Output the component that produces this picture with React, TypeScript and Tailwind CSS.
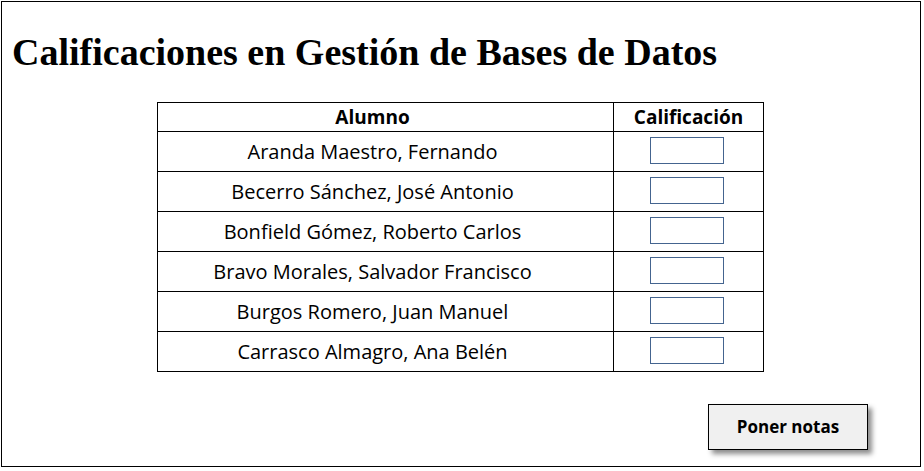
import * as React from 'react'

const alumnos = [
  'Aranda Maestro, Fernando',
  'Becerro Sánchez, José Antonio',
  'Bonfield Gómez, Roberto Carlos',
  'Bravo Morales, Salvador Francisco',
  'Burgos Romero, Juan Manuel',
  'Carrasco Almagro, Ana Belén',
]

const sans = { fontFamily: '"Open Sans", "Noto Sans", sans-serif' }

export default function App() {
  const [notas, setNotas] = React.useState<string[]>(alumnos.map(() => ''))

  return (
    <div className="bg-white w-[924px] h-[471px] pt-px pl-px">
      <div className="w-[920px] h-[466px] border border-black flex flex-col">
        <h1
          className="mt-[31px] pl-[10px] text-[38px] leading-[38px] font-bold text-black"
          style={{ fontFamily: '"Liberation Serif", "Times New Roman", serif' }}
        >
          Calificaciones en Gestión de Bases de Datos
        </h1>

        {/* tabla de notas */}
        <div
          className="ml-[155px] mt-[31px] w-[607px] border border-black text-black"
          style={sans}
        >
          <div className="flex h-[28px]">
            <div className="w-[455px] pr-[26px] flex items-center justify-center text-[19px] font-bold">
              Alumno
            </div>
            <div className="flex-1 border-l border-black flex items-center justify-center text-[19px] font-bold">
              Calificación
            </div>
          </div>
          {alumnos.map((nombre, i) => (
            <div key={nombre} className="flex h-[40px] border-t border-black">
              <div className="w-[455px] pr-[26px] flex items-center justify-center text-[20px]">
                {nombre}
              </div>
              <div className="flex-1 border-l border-black pl-[36px] pt-[5px]">
                <input
                  type="text"
                  value={notas[i]}
                  onChange={(e) => {
                    const next = [...notas]
                    next[i] = e.target.value
                    setNotas(next)
                  }}
                  className="block w-[74px] h-[27px] border border-[#44648f] bg-white outline-none px-1 text-[15px]"
                />
              </div>
            </div>
          ))}
        </div>

        <div className="flex justify-end mr-[52px] mt-[32px]">
          <button
            className="w-[160px] h-[46px] bg-[#f0f0f0] border border-black text-[17px] font-bold text-black shadow-[4px_4px_5px_rgba(0,0,0,0.45)]"
            style={sans}
          >
            Poner notas
          </button>
        </div>
      </div>
    </div>
  )
}
